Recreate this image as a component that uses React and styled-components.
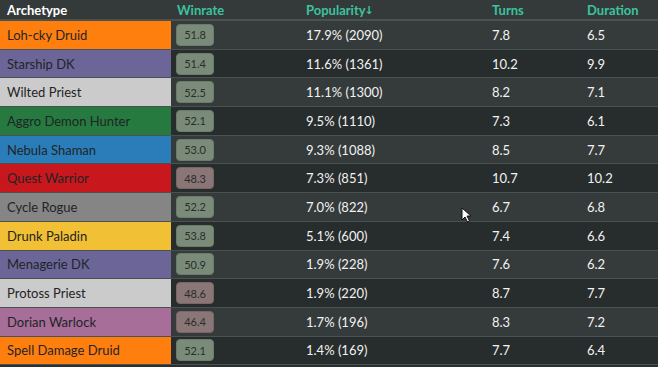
import React from "react";
import styled, { createGlobalStyle } from "styled-components";

const Global = createGlobalStyle`
  html, body {
    margin: 0;
    padding: 0;
    background: #2a2f2f;
  }
  body {
    font-family: Lato, "Open Sans", sans-serif;
  }
`;

// column widths picked from the screenshot
const COLS = "171px 129px 186px 95px 1fr";

const Table = styled.div`
  position: relative;
  width: 658px;
  height: 367px;
  overflow: hidden;
  background: #2a2f2f;
`;

const HeaderRow = styled.div`
  display: grid;
  grid-template-columns: ${COLS};
  height: 21px;
  box-sizing: border-box;
  background: #343a3a;
  border-bottom: 2px solid #4a5150;
`;

const HeadCell = styled.div`
  display: flex;
  align-items: center;
  padding-left: ${(p) => (p.$first ? "7px" : "6px")};
  font-size: 13px;
  font-weight: 700;
  color: ${(p) => (p.$first ? "#ffffff" : "#3cc29e")};
`;

const SortArrow = styled.span`
  font-size: 11px;
  font-weight: 700;
  margin-left: -1px;
  margin-top: 1px;
  font-family: "DejaVu Sans", sans-serif;
`;

const Row = styled.div`
  display: grid;
  grid-template-columns: ${COLS};
  height: 28.7px;
  box-sizing: border-box;
  border-bottom: 1.7px solid #4a5150;
  background: ${(p) => (p.$odd ? "#353b3b" : "#272c2c")};
`;

const NameCell = styled.div`
  display: flex;
  align-items: center;
  padding-left: 7px;
  background: ${(p) => p.$color};
  color: #1f2426;
  font-size: 13px;
`;

const Cell = styled.div`
  display: flex;
  align-items: center;
  padding-left: 6px;
  color: #f2f2f2;
  font-size: 13px;
`;

const Badge = styled.span`
  display: inline-flex;
  align-items: center;
  justify-content: center;
  width: 38px;
  height: 22px;
  margin-left: -1px;
  border-radius: 4px;
  font-size: 11px;
  color: #2a2e2b;
  background: ${(p) => (p.$good ? "#7b8b79" : "#8a7676")};
  border: 1px solid ${(p) => (p.$good ? "#6c7b6a" : "#796666")};
  box-sizing: border-box;
`;

const Cursor = styled.svg`
  position: absolute;
  left: 461px;
  top: 207px;
`;

const rows = [
  ["Loh-cky Druid", "#ff7f0e", 51.8, "17.9% (2090)", "7.8", "6.5"],
  ["Starship DK", "#6b6697", 51.4, "11.6% (1361)", "10.2", "9.9"],
  ["Wilted Priest", "#cbcbcb", 52.5, "11.1% (1300)", "8.2", "7.1"],
  ["Aggro Demon Hunter", "#267a3f", 52.1, "9.5% (1110)", "7.3", "6.1"],
  ["Nebula Shaman", "#2b7db9", 53.0, "9.3% (1088)", "8.5", "7.7"],
  ["Quest Warrior", "#c8171d", 48.3, "7.3% (851)", "10.7", "10.2"],
  ["Cycle Rogue", "#858585", 52.2, "7.0% (822)", "6.7", "6.8"],
  ["Drunk Paladin", "#f2c034", 53.8, "5.1% (600)", "7.4", "6.6"],
  ["Menagerie DK", "#6b6697", 50.9, "1.9% (228)", "7.6", "6.2"],
  ["Protoss Priest", "#cbcbcb", 48.6, "1.9% (220)", "8.7", "7.7"],
  ["Dorian Warlock", "#a66e99", 46.4, "1.7% (196)", "8.3", "7.2"],
  ["Spell Damage Druid", "#ff7f0e", 52.1, "1.4% (169)", "7.7", "6.4"],
];

export default function App() {
  return (
    <Table>
      <Global />
      <HeaderRow>
        <HeadCell $first>Archetype</HeadCell>
        <HeadCell>Winrate</HeadCell>
        <HeadCell>
          Popularity<SortArrow>↓</SortArrow>
        </HeadCell>
        <HeadCell>Turns</HeadCell>
        <HeadCell>Duration</HeadCell>
      </HeaderRow>
      {rows.map((r, i) => (
        <Row key={r[0]} $odd={i % 2 === 0}>
          <NameCell $color={r[1]}>{r[0]}</NameCell>
          <Cell>
            <Badge $good={r[2] >= 50}>{r[2].toFixed(1)}</Badge>
          </Cell>
          <Cell>{r[3]}</Cell>
          <Cell>{r[4]}</Cell>
          <Cell>{r[5]}</Cell>
        </Row>
      ))}
      {/* mouse pointer left in the capture */}
      <Cursor width="11" height="16" viewBox="0 0 11 16">
        <path d="M1 1 L1 13 L4 10 L6.5 15 L8.5 14 L6 9 L10 9 Z" fill="#ffffff" stroke="#111" strokeWidth="1" />
      </Cursor>
    </Table>
  );
}
